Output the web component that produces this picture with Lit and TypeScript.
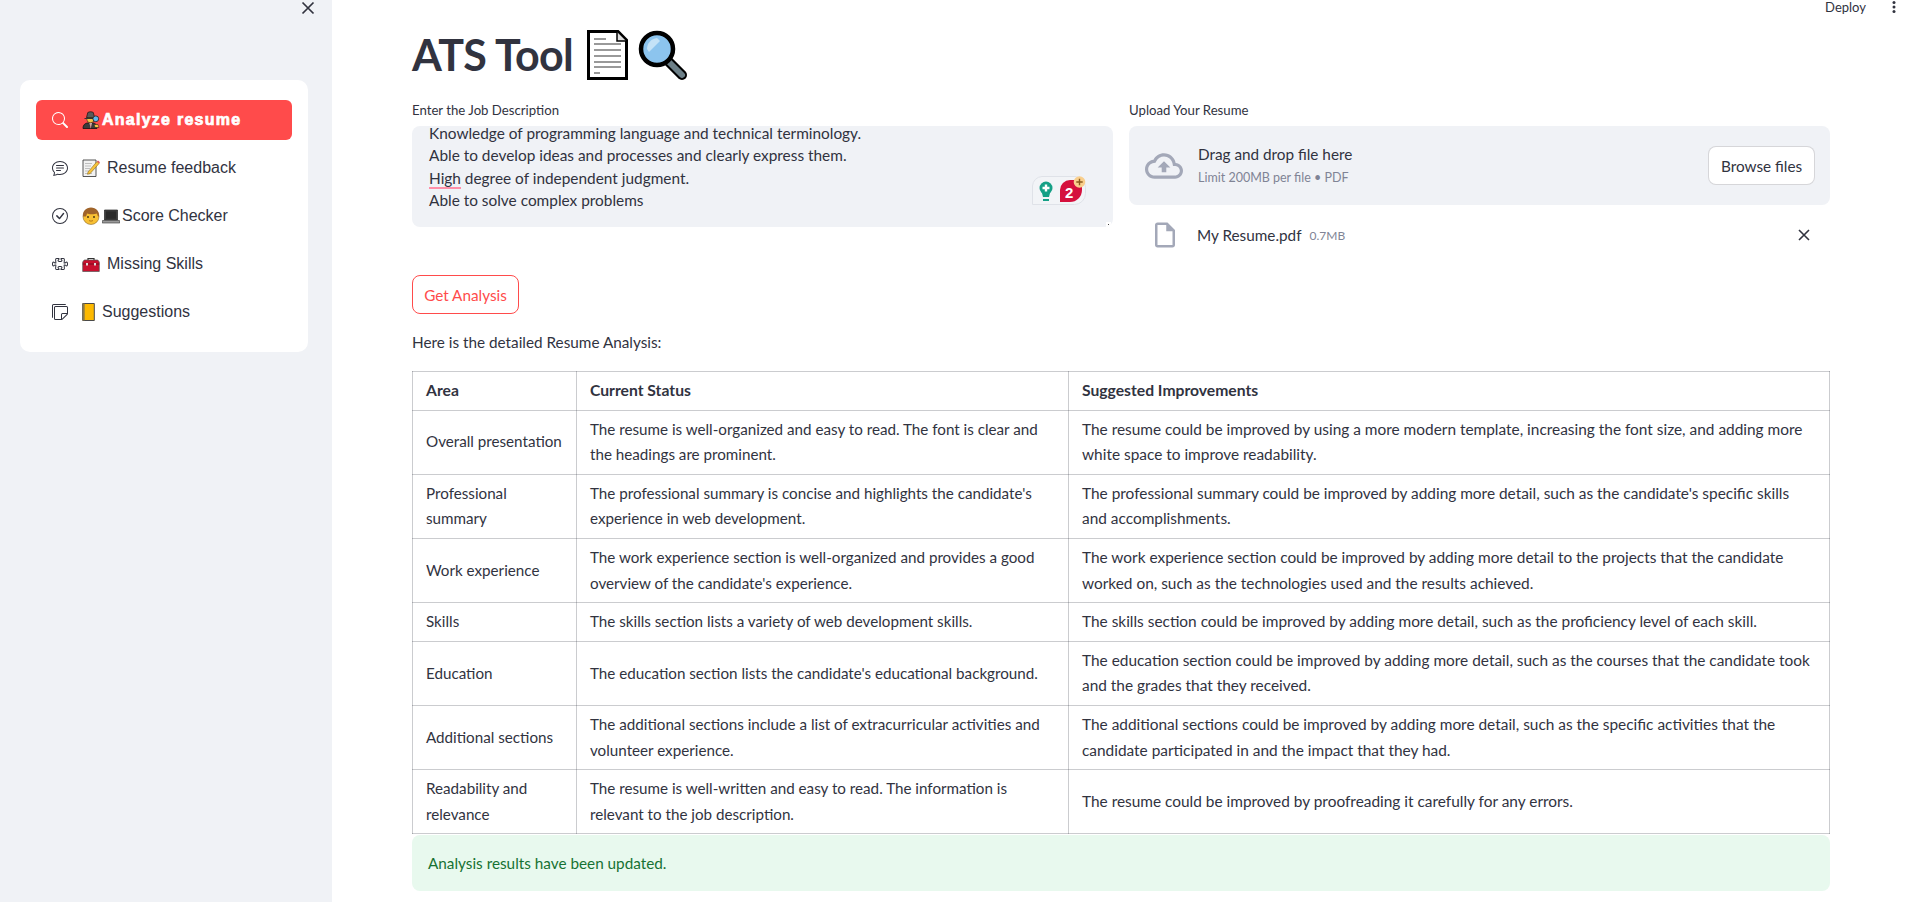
import { LitElement, html, css, svg } from "lit";
import { customElement } from "lit/decorators.js";

const biSearch = svg`<path d="M11.742 10.344a6.5 6.5 0 1 0-1.397 1.398h-.001c.03.04.062.078.098.115l3.85 3.85a1 1 0 0 0 1.415-1.414l-3.85-3.85a1.007 1.007 0 0 0-.115-.1zM12 6.5a5.5 5.5 0 1 1-11 0 5.5 5.5 0 0 1 11 0z"/>`;
const biChat = svg`<path d="M2.678 11.894a1 1 0 0 1 .287.801 10.97 10.97 0 0 1-.398 2c1.395-.323 2.247-.697 2.634-.893a1 1 0 0 1 .71-.074A8.06 8.06 0 0 0 8 14c3.996 0 7-2.807 7-6 0-3.192-3.004-6-7-6S1 4.808 1 8c0 1.468.617 2.83 1.678 3.894zm-.493 3.905a21.682 21.682 0 0 1-.713.129c-.2.032-.352-.176-.273-.362a9.68 9.68 0 0 0 .244-.637l.003-.01c.248-.72.45-1.548.524-2.319C.743 11.37 0 9.76 0 8c0-3.866 3.582-7 8-7s8 3.134 8 7-3.582 7-8 7a9.06 9.06 0 0 1-2.347-.306c-.52.263-1.639.742-3.468 1.105z"/><path d="M4 5.5a.5.5 0 0 1 .5-.5h7a.5.5 0 0 1 0 1h-7a.5.5 0 0 1-.5-.5zM4 8a.5.5 0 0 1 .5-.5h7a.5.5 0 0 1 0 1h-7A.5.5 0 0 1 4 8zm0 2.5a.5.5 0 0 1 .5-.5h4a.5.5 0 0 1 0 1h-4a.5.5 0 0 1-.5-.5z"/>`;
const biCheck = svg`<path d="M8 15A7 7 0 1 1 8 1a7 7 0 0 1 0 14zm0 1A8 8 0 1 0 8 0a8 8 0 0 0 0 16z"/><path d="M10.97 4.97a.235.235 0 0 0-.02.022L7.477 9.417 5.384 7.323a.75.75 0 0 0-1.06 1.06L6.97 11.03a.75.75 0 0 0 1.079-.02l3.992-4.99a.75.75 0 0 0-1.071-1.05z"/>`;
const biPuzzle = svg`<path d="M3.112 3.645A1.5 1.5 0 0 1 4.605 2H7a.5.5 0 0 1 .5.5v.382c0 .696-.497 1.182-.872 1.469a.459.459 0 0 0-.115.118.113.113 0 0 0-.012.025L6.5 4.5v.003l.003.01c.004.01.014.028.036.053a.86.86 0 0 0 .27.194C7.09 4.9 7.51 5 8 5c.492 0 .912-.1 1.19-.24a.86.86 0 0 0 .271-.194.213.213 0 0 0 .039-.063v-.009a.112.112 0 0 0-.012-.025.459.459 0 0 0-.115-.118c-.375-.287-.872-.773-.872-1.469V2.5A.5.5 0 0 1 9 2h2.395a1.5 1.5 0 0 1 1.493 1.645L12.645 6.5h.237c.195 0 .42-.147.675-.48.21-.274.528-.52.943-.52.568 0 .947.447 1.154.862C15.877 6.807 16 7.387 16 8s-.123 1.193-.346 1.638c-.207.415-.586.862-1.154.862-.415 0-.733-.246-.943-.52-.255-.333-.48-.48-.675-.48h-.237l.243 2.855A1.5 1.5 0 0 1 11.395 14H9a.5.5 0 0 1-.5-.5v-.382c0-.696.497-1.182.872-1.469a.459.459 0 0 0 .115-.118.113.113 0 0 0 .012-.025L9.5 11.5v-.003a.214.214 0 0 0-.039-.064.859.859 0 0 0-.27-.193C8.91 11.1 8.49 11 8 11c-.491 0-.912.1-1.19.24a.859.859 0 0 0-.271.194.214.214 0 0 0-.039.063v.003l.001.006a.113.113 0 0 0 .012.025c.016.027.05.068.115.118.375.287.872.773.872 1.469v.382a.5.5 0 0 1-.5.5H4.605a1.5 1.5 0 0 1-1.493-1.645L3.356 9.5h-.238c-.195 0-.42.147-.675.48-.21.274-.528.52-.943.52-.568 0-.947-.447-1.154-.862C.123 9.193 0 8.613 0 8s.123-1.193.346-1.638C.553 5.947.932 5.5 1.5 5.5c.415 0 .733.246.943.52.255.333.48.48.675.48h.238l-.244-2.855zM4.605 3a.5.5 0 0 0-.498.55l.001.007.29 3.4A.5.5 0 0 1 3.9 7.5h-.782c-.696 0-1.182-.497-1.469-.872a.459.459 0 0 0-.118-.115.112.112 0 0 0-.025-.012L1.5 6.5h-.003a.213.213 0 0 0-.064.039.86.86 0 0 0-.193.27C1.1 7.09 1 7.51 1 8c0 .491.1.912.24 1.19.07.14.14.225.194.271a.213.213 0 0 0 .063.039H1.5l.006-.001a.112.112 0 0 0 .025-.012.459.459 0 0 0 .118-.115c.287-.375.773-.872 1.469-.872H3.9a.5.5 0 0 1 .498.542l-.29 3.408a.5.5 0 0 0 .497.55h1.878c-.048-.166-.195-.352-.463-.557-.274-.21-.52-.528-.52-.943 0-.568.447-.947.862-1.154C6.807 10.123 7.387 10 8 10s1.193.123 1.638.346c.415.207.862.586.862 1.154 0 .415-.246.733-.52.943-.268.205-.415.39-.463.557h1.878a.5.5 0 0 0 .498-.55l-.001-.007-.29-3.4A.5.5 0 0 1 12.1 8.5h.782c.696 0 1.182.497 1.469.872.05.065.091.099.118.115.013.008.021.01.025.012a.02.02 0 0 0 .006.001h.003a.214.214 0 0 0 .064-.039.86.86 0 0 0 .193-.27c.14-.28.24-.7.24-1.191 0-.492-.1-.912-.24-1.19a.86.86 0 0 0-.194-.271.215.215 0 0 0-.063-.039H14.5l-.006.001a.113.113 0 0 0-.025.012.459.459 0 0 0-.118.115c-.287.375-.773.872-1.469.872H12.1a.5.5 0 0 1-.498-.543l.29-3.407a.5.5 0 0 0-.497-.55H9.517c.048.166.195.352.463.557.274.21.52.528.52.943 0 .568-.447.947-.862 1.154C9.193 5.877 8.613 6 8 6s-1.193-.123-1.638-.346C5.947 5.447 5.5 5.068 5.5 4.5c0-.415.246-.733.52-.943.268-.205.415-.39.463-.557H4.605z"/>`;
const biStickies = svg`<path d="M1.5 0A1.5 1.5 0 0 0 0 1.5V13a1 1 0 0 0 1 1V1.5a.5.5 0 0 1 .5-.5H14a1 1 0 0 0-1-1H1.5z"/><path d="M3.5 2A1.5 1.5 0 0 0 2 3.5v11A1.5 1.5 0 0 0 3.5 16h6.086a1.5 1.5 0 0 0 1.06-.44l4.915-4.914A1.5 1.5 0 0 0 16 9.586V3.5A1.5 1.5 0 0 0 14.5 2h-11zM3 3.5a.5.5 0 0 1 .5-.5h11a.5.5 0 0 1 .5.5V9h-4.5A1.5 1.5 0 0 0 9 10.5V15H3.5a.5.5 0 0 1-.5-.5v-11zm7 11.293V10.5a.5.5 0 0 1 .5-.5h4.293L10 14.793z"/>`;

const eDetective = html`<svg class="emo" viewBox="0 0 18 18"><path d="M1 17.5c0-4 2.5-5.500 5-5.500h5c2 0 4 1.500 4 5.500z" fill="#3b3b3b" stroke="#111" stroke-width=".8"/><path d="M7.500 12l1.200 5.500 1.200-5.500z" fill="#e8e8e8"/><path d="M8.600 12.500h.6v4h-.6z" fill="#c62828"/><circle cx="8.500" cy="8" r="3.800" fill="#f6c445" stroke="#111" stroke-width=".5"/><path d="M4.500 6.500L5.800 1.500c1.500-1 4-1 5.500 0l1.300 5z" fill="#5a5a5a" stroke="#111" stroke-width=".7"/><path d="M2.500 7h12v1h-12z" fill="#333"/><circle cx="13.800" cy="7.800" r="2.900" fill="#5fb8ee" stroke="#222" stroke-width=".8"/><path d="M12 13.500h4l1 3h-4z" fill="#f6c445" stroke="#111" stroke-width=".5"/></svg>`;
const eMemo = html`<svg class="emo" viewBox="0 0 18 18"><path d="M1 1h13v16.500H1z" fill="#f2f2f2" stroke="#444" stroke-width=".9"/><path d="M3 4.500h7M3 7h6M3 9.500h5M3 12h4M3 14.500h7" stroke="#b8b8b8" stroke-width=".9"/><path d="M6 13L15 2.500l2.200 1.900L8 14.700 5.500 15.300z" fill="#f7c33c" stroke="#7a5a10" stroke-width=".5"/><path d="M15 2.500l1-1 2 1.800-1 1.100z" fill="#e0565a"/></svg>`;
const eBoy = html`<svg class="emo" viewBox="0 0 18 18"><circle cx="9" cy="9.500" r="8" fill="#f8c033" stroke="#8a6a30" stroke-width=".6"/><path d="M1 9.500C.500 4 4 .5 9 .5s8.500 3.500 8 9c-1 0-1.500-.500-2-3-2 .800-8 1-10 0-.5 2.500-1 3-2 3z" fill="#a0642a"/><ellipse cx="6" cy="10" rx=".9" ry="1.100" fill="#3a2a10"/><ellipse cx="12" cy="10" rx=".9" ry="1.100" fill="#3a2a10"/><path d="M7 13.500c1.200.800 2.800.800 4 0" stroke="#9a5a10" stroke-width=".7" fill="none"/></svg>`;
const eLaptop = html`<svg class="emo" viewBox="0 0 18 18"><path d="M2.500 3h13v10h-13z" fill="#444" stroke="#222" stroke-width=".7"/><path d="M3.800 4.300h10.400v7.500H3.800z" fill="#2b2b2b"/><path d="M.500 13.500h17l.3 2.500H.2z" fill="#9a9a9a" stroke="#333" stroke-width=".6"/></svg>`;
const eTool = html`<svg class="emo" viewBox="0 0 18 18"><path d="M6 6V3.500h6V6" fill="none" stroke="#333" stroke-width="1.200"/><path d="M.700 7l1.500-2h13.600l1.500 2v9.500H.700z" fill="#c8102e" stroke="#555" stroke-width=".7"/><path d="M.700 8.500h16.600v1H.700z" fill="#7a0d1e"/><rect x="4" y="8" width="2" height="2.500" fill="#ddd"/><rect x="12" y="8" width="2" height="2.500" fill="#ddd"/></svg>`;
const eLedger = html`<svg class="emo narrow" viewBox="0 0 13 18"><path d="M.700.500h11.600v17H.700z" fill="#fdb900" stroke="#4a4a4a" stroke-width="1"/><path d="M.700.500h2v17h-2z" fill="#8a7a4a"/></svg>`;
const ePage = html`<svg class="page" viewBox="0 0 41 50"><path d="M1.500 1.500H31L39.500 10v38.500h-38z" fill="#fff" stroke="#000" stroke-width="3"/><path d="M30 2v9h9" fill="#ddd" stroke="#000" stroke-width="1.500"/><path d="M7 9h12M7 14h27M7 20h27M7 26h27M7 32h27M7 37h27M7 43h6" stroke="#999" stroke-width="1.800"/></svg>`;
const eMag = html`<svg class="mag" viewBox="0 0 50 50"><path d="M30 31l14 14" stroke="#000" stroke-width="10" stroke-linecap="round"/><path d="M31 32l13 13" stroke="#6d8088" stroke-width="6" stroke-linecap="round"/><circle cx="19" cy="19" r="16" fill="#8cc4ee" stroke="#000" stroke-width="4.500"/><path d="M9 19C9 13 13 9 19 8l3 3-11 11z" fill="#c4e2f7"/></svg>`;

const nav = [
  { icon: biSearch, emoji: eDetective, label: "Analyze resume", gap: false, active: true },
  { icon: biChat, emoji: eMemo, label: "Resume feedback", gap: true, active: false },
  { icon: biCheck, emoji: html`${eBoy}${eLaptop}`, label: "Score Checker", gap: false, active: false },
  { icon: biPuzzle, emoji: eTool, label: "Missing Skills", gap: true, active: false },
  { icon: biStickies, emoji: eLedger, label: "Suggestions", gap: true, active: false },
];

const rows = [
  ["Overall presentation", "The resume is well-organized and easy to read. The font is clear and the headings are prominent.", "The resume could be improved by using a more modern template, increasing the font size, and adding more white space to improve readability."],
  ["Professional summary", "The professional summary is concise and highlights the candidate's experience in web development.", "The professional summary could be improved by adding more detail, such as the candidate's specific skills and accomplishments."],
  ["Work experience", "The work experience section is well-organized and provides a good overview of the candidate's experience.", "The work experience section could be improved by adding more detail to the projects that the candidate worked on, such as the technologies used and the results achieved."],
  ["Skills", "The skills section lists a variety of web development skills.", "The skills section could be improved by adding more detail, such as the proficiency level of each skill."],
  ["Education", "The education section lists the candidate's educational background.", "The education section could be improved by adding more detail, such as the courses that the candidate took and the grades that they received."],
  ["Additional sections", "The additional sections include a list of extracurricular activities and volunteer experience.", "The additional sections could be improved by adding more detail, such as the specific activities that the candidate participated in and the impact that they had."],
  ["Readability and relevance", "The resume is well-written and easy to read. The information is relevant to the job description.", "The resume could be improved by proofreading it carefully for any errors."],
];

@customElement("app-root")
export class AppRoot extends LitElement {
  static styles = css`
    :host { display: flex; width: 1916px; height: 902px; overflow: hidden; background: #fff; color: #31333f;
      font-family: "Lato", "Liberation Sans", sans-serif; font-size: 15.300px; }
    .side { width: 332px; flex: none; background: #f0f2f6; box-sizing: border-box; padding: 80px 24px 0 20px; position: relative; }
    .close { position: absolute; left: 301px; top: 1px; width: 14px; height: 14px; stroke: #31333f; stroke-width: 1.700; fill: none; }
    .menu { background: #fff; border-radius: 10px; padding: 20px 16px; display: flex; flex-direction: column; gap: 8px; height: 272px; box-sizing: border-box;
      font-family: "Liberation Sans", Arial, sans-serif; font-size: 16px; }
    .item { height: 40px; display: flex; align-items: center; padding-left: 16px; border-radius: 6px; }
    .item.active { background: #ff4b4b; color: #fff; font-weight: 700; -webkit-text-stroke: .7px #fff; letter-spacing: 1.250px; }
    .bi { width: 16px; height: 16px; fill: currentColor; flex: none; margin-right: 14px; }
    .emo { width: 18px; height: 18px; flex: none; margin-right: 2px; }
    .emo.narrow { width: 13px; }
    .spaced { margin-left: 5px; }
    .main { flex: 1; min-width: 0; padding: 0 86px 0 80px; position: relative; }
    .top { height: 14px; display: flex; justify-content: flex-end; align-items: center; gap: 26px; margin-right: -66px; font-size: 13px; }
    .kebab { width: 4px; height: 12px; fill: #31333f; }
    h1 { margin: 15px 0 0; height: 51px; display: flex; align-items: center; font-size: 43px; font-weight: 700; line-height: 51px; letter-spacing: -.6px; }
    .page { width: 41px; height: 50px; margin-left: 14px; }
    .mag { width: 50px; height: 50px; margin-left: 10px; }
    .cols { display: grid; grid-template-columns: 701px 701px; column-gap: 16px; margin-top: 20px; }
    .lbl { font-size: 13.200px; height: 20px; line-height: 20px; margin-bottom: 6px; }
    .ta { height: 101px; background: #f0f2f6; border-radius: 8px; box-sizing: border-box; padding: 0 17px; overflow: hidden; line-height: 22.400px; position: relative; font-size: 15.400px; }
    .lines { margin-top: -4px; }
    .hl { padding-bottom: 2px; background: linear-gradient(#ff8fa8, #ff8fa8) no-repeat left bottom / 100% 2px; }
    .gram { position: absolute; left: 620px; top: 50px; width: 54px; height: 29px; }
    .grip { position: absolute; right: 2px; bottom: 0; width: 5px; height: 5px; background: #fff; display: flex; align-items: center; justify-content: center; }
    .grip i { width: 1px; height: 1px; background: #444; }
    .drop { height: 79px; background: #f0f2f6; border-radius: 8px; box-sizing: border-box; display: flex; align-items: center; padding: 0 15px 0 16px; }
    .cloud { width: 38px; height: 38px; fill: #a3a8b8; flex: none; margin-right: 15px; }
    .dz { flex: 1; display: flex; flex-direction: column; gap: 3px; }
    .dz b { font-weight: 400; line-height: 22px; }
    .dz small { font-size: 12.500px; color: #808495; line-height: 20px; }
    .browse { width: 107px; height: 39px; background: #fff; border: 1px solid rgba(49,51,63,.2); border-radius: 8px; box-sizing: border-box; display: flex; align-items: center; justify-content: center; }
    .file { display: flex; align-items: center; height: 40px; margin-top: 10px; padding-left: 26px; }
    .fi { width: 30px; height: 30px; fill: #a3a8b8; margin: 0 17px 0 -5px; flex: none; }
    .fsize { font-size: 12px; color: #808495; margin-left: 8px; flex: 1; }
    .fx { width: 12px; height: 12px; stroke: #31333f; stroke-width: 1.600; fill: none; margin-right: 20px; }
    .btn { display: inline-flex; align-items: center; justify-content: center; width: 107px; height: 39px; box-sizing: border-box; border: 1px solid #ff4b4b; color: #ff4b4b; border-radius: 8px; margin-top: 20px; }
    p { margin: 16px 0 0; line-height: 25.600px; height: 41px; }
    table { width: 1418px; border-collapse: collapse; table-layout: fixed; line-height: 25.600px; font-size: 15.200px; }
    th, td { box-sizing: border-box; border: 1px solid rgba(49,51,63,.25); padding: 6px 13px; text-align: left; vertical-align: middle; font-weight: 400; }
    th { font-weight: 700; font-size: 15.700px; }
    td.c { font-size: 15.420px; }
    .a { width: 164px; } .b { width: 492px; }
    .ok { margin-top: 1px; height: 56px; background: #e8f9ee; color: #177233; border-radius: 8px; display: flex; align-items: center; padding-left: 16px; }
  `;

  render() {
    return html`
      <aside class="side">
        <svg class="close" viewBox="0 0 14 14"><path d="M1.500 1.500l11 11M12.500 1.500l-11 11"/></svg>
        <nav class="menu">
          ${nav.map(n => html`<div class="item ${n.active ? "active" : ""}">
            <svg class="bi" viewBox="0 0 16 16">${n.icon}</svg>${n.emoji}<span class="${n.gap ? "spaced" : ""}">${n.label}</span>
          </div>`)}
        </nav>
      </aside>
      <main class="main">
        <div class="top"><span>Deploy</span><svg class="kebab" viewBox="0 0 4 12"><circle cx="2" cy="1.500" r="1.500"/><circle cx="2" cy="6" r="1.500"/><circle cx="2" cy="10.500" r="1.500"/></svg></div>
        <h1>ATS Tool${ePage}${eMag}</h1>
        <div class="cols">
          <div>
            <div class="lbl">Enter the Job Description</div>
            <div class="ta">
              <div class="lines">
                <div>Knowledge of programming language and technical terminology.</div>
                <div>Able to develop ideas and processes and clearly express them.</div>
                <div><span class="hl">High</span> degree of independent judgment.</div>
                <div>Able to solve complex problems</div>
              </div>
              <svg class="gram" viewBox="0 0 54 29">
                <path d="M10 .5h33a11 11 0 0 1 10.500 11v6a11 11 0 0 1-11 11H.5V10A10 10 0 0 1 10 .5z" fill="#f2f4f7" stroke="#dfe2e8"/>
                <circle cx="14" cy="12" r="6.500" fill="#15a086"/><path d="M10 17h8l-1 4h-6z" fill="#15a086"/><path d="M11 23h6v2h-6z" fill="#15a086"/><path d="M12.800 8.500h2.400v2.300h2.300v2.400h-2.300v2.300h-2.400v-2.300h-2.300v-2.400h2.300z" fill="#fff"/>
                <path d="M28 26V14a10 10 0 0 1 10-10h12v10a12 12 0 0 1-12 12z" fill="#d5103d"/>
                <text x="33" y="22" font-size="15" font-weight="700" fill="#fff" font-family="Liberation Sans">2</text>
                <circle cx="47.500" cy="6" r="5.800" fill="#f9cf8d"/><path d="M46.800 2.800h1.400v2.500h2.500v1.400h-2.500v2.500h-1.400V6.700h-2.500V5.300h2.500z" fill="#8a5a1c"/>
              </svg>
              <div class="grip"><i></i></div>
            </div>
          </div>
          <div>
            <div class="lbl">Upload Your Resume</div>
            <div class="drop">
              <svg class="cloud" viewBox="0 0 24 24"><path d="M19.350 10.040C18.670 6.590 15.640 4 12 4 9.110 4 6.600 5.640 5.350 8.040 2.340 8.360 0 10.910 0 14c0 3.310 2.690 6 6 6h13c2.760 0 5-2.240 5-5 0-2.640-2.050-4.780-4.650-4.960zM19 18H6c-2.210 0-4-1.790-4-4 0-2.050 1.530-3.760 3.560-3.970l1.070-.11.5-.95C8.080 7.140 9.940 6 12 6c2.620 0 4.880 1.860 5.390 4.430l.3 1.500 1.530.11c1.560.1 2.780 1.410 2.780 2.960 0 1.650-1.350 3-3 3zM8 13h2.550v3h2.900v-3H16l-4-4z"/></svg>
              <div class="dz"><b>Drag and drop file here</b><small>Limit 200MB per file • PDF</small></div>
              <div class="browse">Browse files</div>
            </div>
            <div class="file">
              <svg class="fi" viewBox="0 0 24 24"><path d="M14 2H6c-1.100 0-1.990.9-1.990 2L4 20c0 1.100.89 2 1.990 2H18c1.100 0 2-.9 2-2V8l-6-6zM6 20V4h7v5h5v11H6z"/></svg>
              <span>My Resume.pdf</span><span class="fsize">0.7MB</span>
              <svg class="fx" viewBox="0 0 12 12"><path d="M1 1l10 10M11 1L1 11"/></svg>
            </div>
          </div>
        </div>
        <div class="btn">Get Analysis</div>
        <p>Here is the detailed Resume Analysis:</p>
        <table>
          <thead><tr><th class="a">Area</th><th class="b">Current Status</th><th>Suggested Improvements</th></tr></thead>
          <tbody>${rows.map(r => html`<tr><td>${r[0]}</td><td>${r[1]}</td><td class="c">${r[2]}</td></tr>`)}</tbody>
        </table>
        <div class="ok">Analysis results have been updated.</div>
      </main>
    `;
  }
}
